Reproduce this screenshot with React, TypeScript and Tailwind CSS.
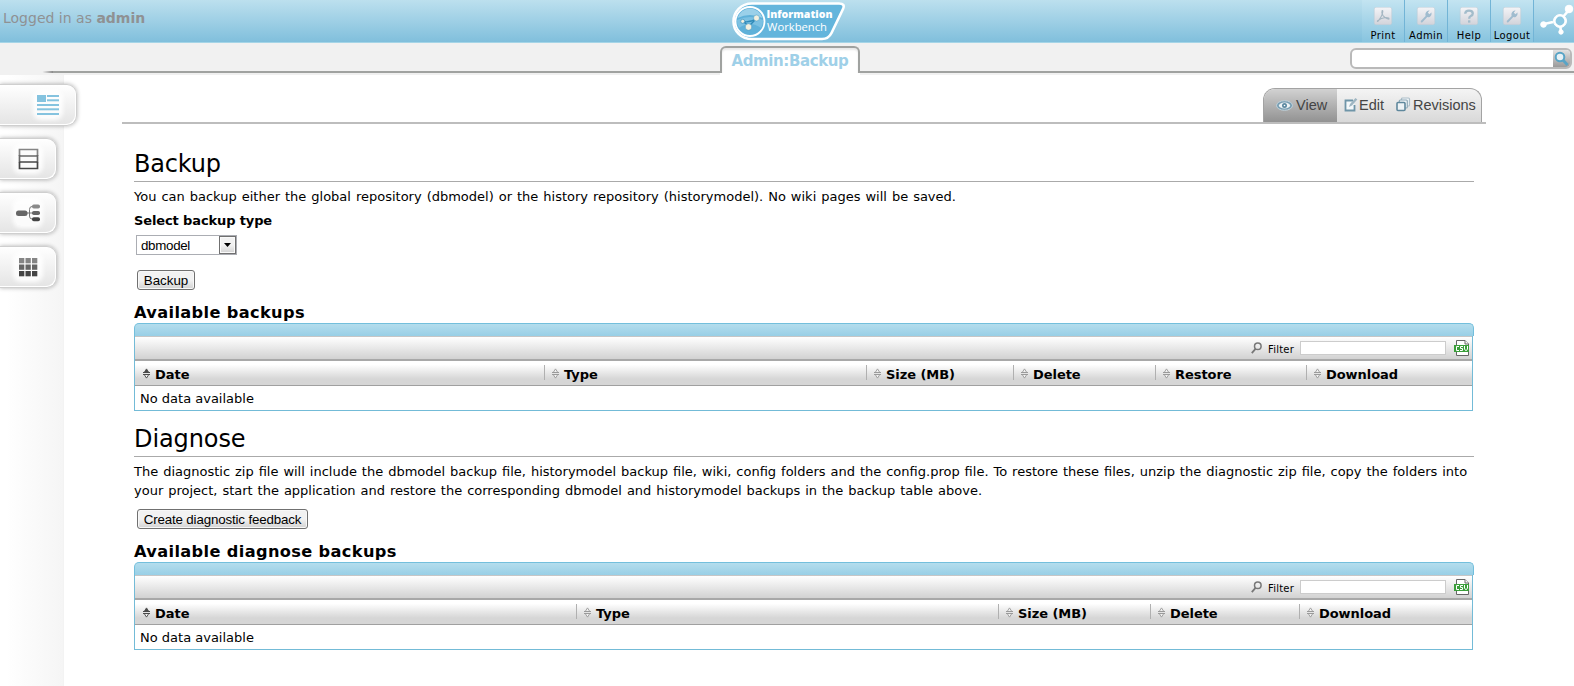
import React from "react";

type Column = { label: string; width: string; active?: boolean };

function Logo() {
  return (
    <svg width="118" height="42" viewBox="0 0 118 42" className="shrink-0">
      <path
        d="M22 3.500H109Q115.500 3.500 113 9L101.500 33Q98.500 39 92 39H22C11 39 3.500 31 3.500 21.500S11 3.500 22 3.500Z"
        fill="#64b5dc"
        stroke="#fff"
        strokeWidth="2.6"
      />
      <circle cx="20" cy="21.500" r="14.500" fill="#5fb1d9" stroke="#fff" strokeWidth="1.800" />
      <path d="M7.500 18A13 13 0 0 1 32.500 18Q20 12 7.500 18Z" fill="#9ad0e9" />
      <path d="M7 20Q20 14 33 20A13 13 0 0 1 31 28Q20 20 9 28A13 13 0 0 1 7 20Z" fill="#7cc1e2" />
      <path d="M13 21.500L19 26L26.500 18.500M13 21.500Q20 23 26.500 18.500" stroke="#2f8ab8" strokeWidth="1.400" fill="none" />
      <circle cx="12.700" cy="21.300" r="2" fill="#f2f0e0" stroke="#2f8ab8" strokeWidth=".6" />
      <circle cx="26.500" cy="18" r="3" fill="#f2f0e0" stroke="#3f97c2" strokeWidth=".5" />
      <circle cx="18.500" cy="27" r="3.300" fill="#f2f0e0" stroke="#2f8ab8" strokeWidth=".5" />
      <g fill="#fff" fontFamily="'Open Sans', sans-serif">
        <text x="36.500" y="18" fontSize="10.600" fontWeight="800" textLength="66" lengthAdjust="spacingAndGlyphs">Information</text>
        <text x="37" y="30.800" fontSize="11.500" textLength="60" lengthAdjust="spacingAndGlyphs">Workbench</text>
      </g>
    </svg>
  );
}

function ToolGlyph({ kind }: { kind: string }) {
  return (
    <svg width="20" height="20" viewBox="0 0 20 20" className="block">
      <defs>
        <linearGradient id="tool" x1="0" y1="0" x2="0" y2="1">
          <stop offset="0" stopColor="#f4f4f7" />
          <stop offset="1" stopColor="#d2d3da" />
        </linearGradient>
      </defs>
      <rect x=".3" y=".3" width="19.400" height="19.400" rx="2" fill="url(#tool)" stroke="#c0ccd6" strokeWidth=".6" />
      {kind === "pdf" && (
        <path
          d="M9 4Q8 6 10 9.500Q13 13.500 16.500 13.500Q17.500 12 13 11.700Q8 12 3.800 15.500Q3.500 17 5.500 14.500Q9.500 9 9.800 5Q9.800 3.500 9 4Z"
          fill="none"
          stroke="#a4b6c2"
          strokeWidth="1.200"
          strokeLinejoin="round"
        />
      )}
      {kind === "wrench" && (
        <path
          d="M4.200 15.600L9.600 10Q8.500 6.400 11.500 4.400Q12.700 3.700 14 4L12 6.200L13.700 8L16.200 6.200Q16.700 9 14.500 10.700Q13 11.600 11.400 11.200L6 17Q4 18 4.200 15.600Z"
          fill="#a0bccf"
        />
      )}
      {kind === "help" && (
        <g fill="none" stroke="#a3bccb" strokeWidth="2.600">
          <path d="M5.800 7.500Q5.800 4 10 4Q14.200 4 14.200 7.200Q14.200 9 12 10Q10.200 10.800 10.200 13" />
          <path d="M10.200 14.800V17.400" />
        </g>
      )}
    </svg>
  );
}

function HeaderButton({ kind, label, first }: { kind: string; label: string; first?: boolean }) {
  return (
    <div className={first ? "flex h-[42px] w-[42px] flex-col items-center bg-gradient-to-b from-[#c3e4f1] to-[#87c4df] pt-[7px]" : "flex h-[42px] w-[43px] flex-col items-center border-l border-[#72b4d6] bg-gradient-to-b from-[#c3e4f1] to-[#87c4df] pt-[7px]"}>
      <ToolGlyph kind={kind} />
      <span className="mt-[5px] whitespace-nowrap text-[10px] leading-[12px] tracking-[0.4px] text-black">{label}</span>
    </div>
  );
}

function NetworkMark() {
  return (
    <svg width="40" height="42" viewBox="0 0 40 42" className="block">
      <g stroke="#fff" fill="#fff">
        <path d="M10 24L19 22M28 18L35 10M26 24L27 32" strokeWidth="2.600" />
        <circle cx="9.500" cy="24.500" r="2.800" />
        <circle cx="35" cy="9" r="3.800" />
        <circle cx="27" cy="32" r="2.200" />
        <circle cx="26" cy="21" r="6.500" />
      </g>
      <circle cx="26" cy="21" r="4.400" fill="#8cc7e1" />
    </svg>
  );
}

function SideTab({ wide, children }: { wide?: boolean; children: React.ReactNode }) {
  return (
    <div className={wide ? "relative mb-[12px] flex h-[42px] w-[77px] items-center rounded-r-[10px] border border-l-0 border-[#cfcfcf] bg-gradient-to-b from-white to-[#e4e4e4] pl-[35px] shadow-[0_0_4px_rgba(0,0,0,0.3),inset_-1px_-1px_0_#fff]" : "relative mb-[12px] flex h-[42px] w-[57px] items-center rounded-r-[10px] border border-l-0 border-[#cfcfcf] bg-gradient-to-b from-white to-[#e4e4e4] pl-[15px] shadow-[0_0_4px_rgba(0,0,0,0.3),inset_-1px_-1px_0_#fff]"}>
      <span className="rounded-md bg-white/80 p-[1px] shadow-[0_0_4px_2px_rgba(255,255,255,0.9)]">{children}</span>
    </div>
  );
}

function SideNav() {
  return (
    <nav className="w-[64px] shrink-0 border-r border-[#f3f3f3] bg-gradient-to-r from-white from-10% to-[#f5f5f5] pt-[9px]">
      <SideTab wide>
        <svg width="24" height="24" viewBox="0 0 24 24" className="block" fill="#85c3df">
          <rect x="1" y="2" width="9" height="7" />
          <rect x="11" y="2" width="12" height="2" />
          <rect x="11" y="6.300" width="12" height="2" />
          <rect x="1" y="11" width="22" height="2" />
          <rect x="1" y="15.300" width="22" height="2" />
          <rect x="1" y="20" width="22" height="2" />
        </svg>
      </SideTab>
      <SideTab>
        <svg width="24" height="24" viewBox="0 0 24 24" className="block" fill="none" strokeWidth="1.700">
          <path d="M3.500 9V2.500H21.500V9" stroke="#858585" />
          <path d="M3.500 8V15.500M21.500 8V15.500M3.500 9H21.500" stroke="#686868" />
          <path d="M3.500 15V21.500H21.500V15M3.500 15H21.500" stroke="#474747" />
        </svg>
      </SideTab>
      <SideTab>
        <svg width="24" height="24" viewBox="0 0 24 24" className="block">
          <path d="M10 12H18M19 5.500H16Q13.500 5.500 13.500 8.500V15Q13.500 18 16 18H18" fill="none" stroke="#777" />
          <rect x="0" y="9.500" width="11.500" height="5.500" rx="2.500" fill="#666" />
          <rect x="16" y="3.500" width="8" height="4" rx="1.800" fill="#8a8a8a" />
          <rect x="16" y="10" width="8" height="4" rx="1.800" fill="#666" />
          <rect x="16" y="16.300" width="8" height="4" rx="1.800" fill="#444" />
        </svg>
      </SideTab>
      <SideTab>
        <svg width="24" height="24" viewBox="0 0 24 24" className="block">
          {[3, 9.500, 16].map((y, r) =>
            [3, 9.500, 16].map((x) => (
              <rect key={x + "-" + y} x={x} y={y} width="5.300" height="5.300" fill={["#858585", "#666666", "#444444"][r]} />
            )),
          )}
        </svg>
      </SideTab>
    </nav>
  );
}

function SortMark({ active }: { active?: boolean }) {
  const c = active ? "#4a4a4a" : "#9a9a9a";
  return (
    <svg width="7" height="11" viewBox="0 0 7 11" className="mr-[1px] block shrink-0">
      <path d="M3.500 .9L5.800 4.500H1.200Z" fill={active ? c : "#f2f2f2"} stroke={c} strokeWidth=".9" />
      <path d="M3.500 10.100L5.800 6.500H1.200Z" fill="#f2f2f2" stroke={c} strokeWidth=".9" />
      <path d="M0 4.500H7M0 6.500H7" stroke={c} strokeWidth="1" />
    </svg>
  );
}

function CsvIcon() {
  return (
    <svg width="16" height="16" viewBox="0 0 16 16" className="block shrink-0">
      <path d="M2.500 .5H11L14.500 4V15.500H2.500Z" fill="#fff" stroke="#666" />
      <path d="M11 .5V4H14.500" fill="#fff" stroke="#666" />
      <rect x="0" y="5" width="15" height="7" fill="#3a9e3a" />
      <path d="M5 6.500H2.500V10.500H5M9 6.500H6.500V8.500H8.500V10.500H6M10.500 6V9L11.500 10.500H12.500L13.500 9V6" fill="none" stroke="#fff" />
    </svg>
  );
}

function DataTable({ columns }: { columns: Column[] }) {
  return (
    <div className="w-[1340px]">
      <div className="h-[13px] rounded-t-[5px] border border-b-0 border-[#73bfdc] bg-gradient-to-b from-[#b4dded] to-[#98cfe6]" />
      <div className="w-[1339px] border border-t-0 border-[#73bbd7]">
        <div className="flex h-[25px] items-center justify-end border-t border-b-2 border-t-[#c6c6c6] border-b-[#a8a8a8] bg-gradient-to-b from-white to-[#d2d2d2] pr-[2px]">
          <svg width="11" height="12" viewBox="0 0 11 12" className="mr-[6px] block">
            <circle cx="6.800" cy="4.200" r="3.300" fill="none" stroke="#777" strokeWidth="1.500" />
            <path d="M4.500 6.800L.8 11.200" stroke="#777" strokeWidth="1.800" />
          </svg>
          <span className="mr-[6px] pt-[3px] text-[10px] leading-[12px] tracking-[0.2px]">Filter</span>
          <span className="mr-[8px] h-[14px] w-[146px] border border-[#cccccc] bg-white" />
          <CsvIcon />
        </div>
        <div className="flex h-[25px] border-b border-[#a0a0a0] bg-gradient-to-b from-white from-15% to-[#d6d6d6] to-75%">
          {columns.map((c, i) => (
            <div key={c.label} className={c.width + " flex items-start pt-[4px]"}>
              <span className={i === 0 ? "h-[15px] w-px" : "h-[15px] w-px bg-[#b0b0b0]"} />
              <span className="pl-[7px] pt-[3px]"><SortMark active={c.active} /></span>
              <span className="pl-[4px] pt-[2px] text-[13px] font-bold leading-[16px] tracking-[-0.05px] whitespace-nowrap">{c.label}</span>
            </div>
          ))}
        </div>
        <div className="flex h-[24px] items-center bg-white pl-[5px] pt-[2px]"><span className="text-[13px] leading-[16px]">No data available</span></div>
      </div>
    </div>
  );
}

const backupColumns: Column[] = [
  { label: "Date", width: "w-[409px]", active: true },
  { label: "Type", width: "w-[322px]" },
  { label: "Size (MB)", width: "w-[147px]" },
  { label: "Delete", width: "w-[142px]" },
  { label: "Restore", width: "w-[151px]" },
  { label: "Download", width: "flex-1" },
];

const diagnoseColumns: Column[] = [
  { label: "Date", width: "w-[441px]", active: true },
  { label: "Type", width: "w-[422px]" },
  { label: "Size (MB)", width: "w-[152px]" },
  { label: "Delete", width: "w-[149px]" },
  { label: "Download", width: "flex-1" },
];

function PushButton({ children, className }: { children: React.ReactNode; className: string }) {
  return (
    <button className={className + " flex h-[20px] items-center justify-center rounded-[3px] border border-[#707070] bg-gradient-to-b from-[#f2f2f2] from-50% to-[#d2d2d2] pt-[1px] font-['Liberation_Sans',Arial,sans-serif] text-[13.333px] leading-[17px] text-black shadow-[inset_0_0_0_1px_#f8f8f8]"}>
      <span className="whitespace-nowrap">{children}</span>
    </button>
  );
}

function ViewTabs() {
  return (
    <div className="ml-[58px] flex h-[49px] w-[1364px] items-end justify-end border-b-2 border-[#bdbdbd] pr-[4px]">
      <div className="flex h-[34px] w-[219px] overflow-hidden rounded-t-[12px] border border-b-0 border-[#a3a3a3] bg-gradient-to-b from-[#f4f4f4] to-[#d9d9d9] font-['Liberation_Sans',Arial,sans-serif] text-[14.5px] text-[#444]">
        <div className="flex w-[73px] shrink-0 items-center bg-gradient-to-b from-[#d2d2d2] to-[#929292] pl-[12px]">
          <svg width="17" height="11" viewBox="0 0 17 11" className="mr-[3px] block shrink-0">
            <ellipse cx="8.500" cy="5.500" rx="8" ry="4.800" fill="#7ba0b4" stroke="#c0d0d9" />
            <ellipse cx="8.500" cy="5.500" rx="5.600" ry="3" fill="#eef3f6" />
            <circle cx="8.500" cy="5.500" r="2.500" fill="#5d8aa2" />
            <circle cx="8.500" cy="5.500" r=".8" fill="#fff" />
          </svg>
          <span>View</span>
        </div>
        <div className="flex shrink-0 items-center pl-[7px]">
          <svg width="14" height="16" viewBox="0 0 14 16" className="mr-[1px] mt-[-2px] block">
            <path d="M9 3.500H1.500V13.500H10.500V8" fill="#f4f8fa" stroke="#6f95a8" strokeWidth="1.800" />
            <path d="M5 10L6 7L11.500 1L13.300 2.500L8 8.500Z" fill="#9fb6c2" />
          </svg>
          <span>Edit</span>
        </div>
        <div className="flex shrink-0 items-center pl-[12px]">
          <svg width="15" height="15" viewBox="0 0 15 15" className="mr-[2px] mt-[-2px] block" fill="#eef3f6" strokeWidth="1.200">
            <rect x="5.500" y="1" width="8" height="8" rx="1" stroke="#aebfc9" />
            <rect x="3.300" y="3" width="8" height="8" rx="1" stroke="#8faab8" />
            <rect x="1" y="5.500" width="8" height="8" rx="1" stroke="#5f889d" strokeWidth="1.600" />
          </svg>
          <span>Revisions</span>
        </div>
      </div>
    </div>
  );
}

export default function App() {
  return (
    <div className="flex h-[686px] w-[1574px] flex-col overflow-hidden bg-white font-['DejaVu_Sans',Verdana,sans-serif] text-black">
      <header className="flex h-[43px] shrink-0 border-b border-[#a5d5e7] bg-gradient-to-b from-[#bce0ee] to-[#80bfdc]">
        <div className="w-[730px] pl-[3px] pt-[9px] text-[14px] leading-[18px] text-[#8f9193]">Logged in as <b>admin</b></div>
        <Logo />
        <div className="ml-auto flex">
          <HeaderButton kind="pdf" label="Print" first />
          <HeaderButton kind="wrench" label="Admin" />
          <HeaderButton kind="help" label="Help" />
          <HeaderButton kind="wrench" label="Logout" />
          <div className="w-[41px] border-l border-[#72b4d6]"><NetworkMark /></div>
        </div>
      </header>
      <div className="flex h-[32px] shrink-0 bg-[#f1f1f1]">
        <div className="mt-[28px] h-[2px] w-[53px] bg-gradient-to-r from-transparent from-80% to-[#8a8a8a]" />
        <div className="mt-[28px] h-[4px] w-[667px] border-t-2 border-[#a0a2a0] bg-[#f0f0f0]" />
        <div className="flex h-[32px] w-[140px] flex-col pt-[3px]">
          <div className="h-[27px] rounded-t-[6px] border-2 border-b-0 border-[#a0a2a0] bg-white text-center text-[15px] font-bold leading-[26px] tracking-[-0.4px] text-[#9fd0e8] shadow-[inset_0_2px_2px_#e8e8e8]">Admin:Backup</div>
          <div className="h-[2px] bg-white" />
        </div>
        <div className="flex flex-1 flex-col">
          <div className="flex h-[30px] justify-end border-b-2 border-[#a0a2a0] pr-[2px] pt-[5px]">
            <div className="flex h-[21px] w-[222px] justify-end overflow-hidden rounded-[6px] border-2 border-[#b9b9b9] bg-white">
              <div className="flex h-[17px] w-[17px] items-center justify-center bg-gradient-to-b from-[#e2e2e2] to-[#9a9a9a]">
                <svg width="15" height="15" viewBox="0 0 15 15">
                  <circle cx="6" cy="6" r="4.300" fill="#e6f1f6" stroke="#58a4c6" strokeWidth="2" />
                  <path d="M9 9L13.500 14" stroke="#58a4c6" strokeWidth="2.800" />
                </svg>
              </div>
            </div>
          </div>
        </div>
      </div>
      <div className="flex flex-1">
        <SideNav />
        <main>
          <ViewTabs />
          <div className="ml-[70px] w-[1340px]">
            <h1 className="mt-[23px] h-[35px] border-b border-[#aaaaaa] text-[24px] leading-[34px] tracking-[-0.2px]">Backup</h1>
            <p className="mt-[5px] text-[13px] leading-[19px] [word-spacing:0.85px]">You can backup either the global repository (dbmodel) or the history repository (historymodel). No wiki pages will be saved.</p>
            <p className="mt-[5px] text-[13px] font-bold leading-[19px] tracking-[-0.12px]">Select backup type</p>
            <div className="ml-[2px] mt-[5px] flex h-[20px] w-[101px] items-center border border-[#abadb3] bg-white pl-[4px] font-['Liberation_Sans',Arial,sans-serif] text-[13.333px] leading-[16px]">
              <span className="pt-[1px] tracking-[-0.3px]">dbmodel</span>
              <div className="ml-auto flex h-[18px] w-[17px] items-center justify-center border border-[#707070] bg-gradient-to-b from-[#f2f2f2] from-50% to-[#d2d2d2] shadow-[inset_0_0_0_1px_#fafafa]">
                <svg width="7" height="4" viewBox="0 0 7 4"><path d="M0 0H7L3.500 4Z" /></svg>
              </div>
            </div>
            <div className="ml-[3px] mt-[15px] flex"><PushButton className="w-[58px]">Backup</PushButton></div>
            <h2 className="mt-[10px] h-[23px] pt-[1px] text-[16.2px] font-bold leading-[23px] tracking-[0.36px]">Available backups</h2>
            <DataTable columns={backupColumns} />
            <h1 className="mt-[11px] h-[35px] border-b border-[#aaaaaa] text-[24px] leading-[34px] tracking-[-0.1px]">Diagnose</h1>
            <p className="mt-[5px] whitespace-nowrap text-[13px] leading-[19px] [word-spacing:0.82px]">
              The diagnostic zip file will include the dbmodel backup file, historymodel backup file, wiki, config folders and the config.prop file. To restore these files, unzip the diagnostic zip file, copy the folders into
              <br />
              your project, start the application and restore the corresponding dbmodel and historymodel backups in the backup table above.
            </p>
            <div className="ml-[3px] mt-[9px] flex"><PushButton className="w-[171px] tracking-[-0.15px]">Create diagnostic feedback</PushButton></div>
            <h2 className="mt-[10px] h-[23px] pt-[1px] text-[16.2px] font-bold leading-[23px] tracking-[0.36px]">Available diagnose backups</h2>
            <DataTable columns={diagnoseColumns} />
          </div>
        </main>
      </div>
    </div>
  );
}
